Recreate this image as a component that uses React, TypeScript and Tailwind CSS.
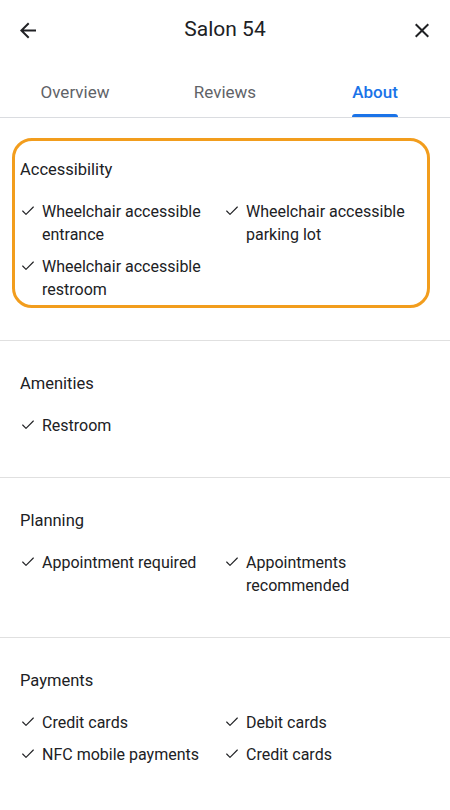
import { Check } from "lucide-react";

type Section = {
  title: string;
  items: string[];
};

const sections: Section[] = [
  { title: "Amenities", items: ["Restroom"] },
  {
    title: "Planning",
    items: ["Appointment required", "Appointments recommended"],
  },
  {
    title: "Payments",
    items: [
      "Credit cards",
      "Debit cards",
      "NFC mobile payments",
      "Credit cards",
    ],
  },
];

const accessibility = [
  "Wheelchair accessible entrance",
  "Wheelchair accessible parking lot",
  "Wheelchair accessible restroom",
];

const tabs = ["Overview", "Reviews", "About"];

const ItemGrid = ({ items }: { items: string[] }) => (
  <ul className="mt-[19px] grid grid-cols-[204px_204px] gap-y-[9px]">
    {items.map((item, i) => (
      <li key={`item-${i}`} className="flex items-start gap-[6px]">
        <Check
          size={16}
          strokeWidth={1.7}
          className="mt-[3px] shrink-0 text-[#202124]"
        />
        <span className="max-w-[165px] text-[16px] leading-[23px] text-[#202124]">
          {item}
        </span>
      </li>
    ))}
  </ul>
);

const App = () => {
  return (
    <div
      className="w-[450px] min-h-[810px] bg-white"
      style={{ fontFamily: "Roboto, 'Noto Sans', Arial, sans-serif" }}
    >
      {/* header */}
      <div className="flex h-[60px] items-center justify-between px-4">
        <button className="flex h-6 w-6 items-center justify-center">
          <svg width="25" height="25" viewBox="0 0 24 24" fill="#202124">
            <path d="M20 11H7.83l5.59-5.59L12 4l-8 8 8 8 1.41-1.41L7.83 13H20v-2z" />
          </svg>
        </button>
        <h1 className="text-[21px] font-normal text-[#202124]">Salon 54</h1>
        <button className="flex h-6 w-6 items-center justify-center">
          <svg width="25" height="25" viewBox="0 0 24 24" fill="#202124">
            <path d="M19 6.41L17.59 5 12 10.59 6.41 5 5 6.41 10.59 12 5 17.59 6.41 19 12 13.41 17.59 19 19 17.59 13.41 12z" />
          </svg>
        </button>
      </div>

      {/* tabs */}
      <div className="grid h-[58px] grid-cols-3 border-b border-[#dadce0]">
        {tabs.map((tab) => {
          const active = tab === "About";
          return (
            <div
              key={tab}
              className="flex h-[57px] flex-col items-center pt-[21px]"
            >
              <div className="flex flex-col items-center">
                <span
                  className={
                    active
                      ? "text-[17px] leading-[22px] font-medium text-[#1a73e8]"
                      : "text-[17px] leading-[22px] font-normal text-[#5f6368]"
                  }
                >
                  {tab}
                </span>
                {active && (
                  <div className="mt-[11px] h-[3px] w-full rounded-t-[3px] bg-[#1a73e8]" />
                )}
              </div>
            </div>
          );
        })}
      </div>

      {/* accessibility, highlighted */}
      <div className="pt-[20px] pb-[32px]">
        <div className="ml-3 mr-5 rounded-[20px] border-[3px] border-[#f29d1d] pt-[18px] pb-[4px] pl-[5px]">
          <h2 className="text-[16.5px] leading-[22px] text-[#202124]">
            Accessibility
          </h2>
          <ItemGrid items={accessibility} />
        </div>
      </div>

      {sections.map((section) => (
        <div
          key={section.title}
          className="border-t border-[#e0e0e0] px-5 pt-[32px] pb-[40px]"
        >
          <h2 className="text-[16.5px] leading-[22px] text-[#202124]">
            {section.title}
          </h2>
          <ItemGrid items={section.items} />
        </div>
      ))}
    </div>
  );
};

export default App;
